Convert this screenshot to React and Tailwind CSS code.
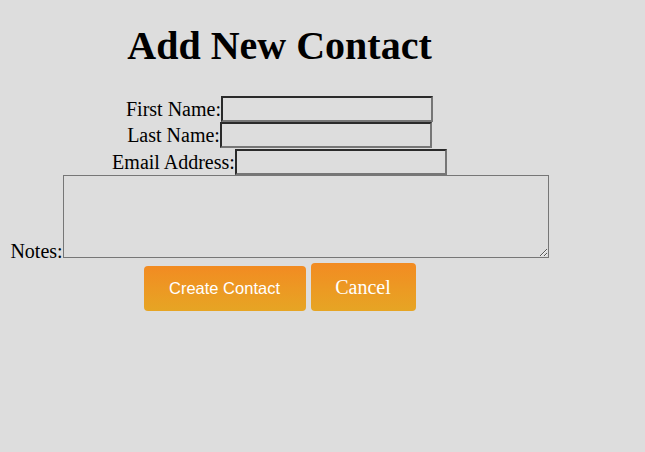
export default function App() {
  const inputCls =
    "w-[212px] h-[26px] bg-[#dddddd] border-2 border-t-[#2a2a2a] border-l-[#2a2a2a] border-b-[#767676] border-r-[#767676] outline-none";
  return (
    <div className="min-h-screen w-full bg-[#dddddd] text-black font-['Liberation_Serif',serif] text-[20px]">
      <div className="w-[559px]">
        <h1 className="pt-[23px] text-center text-[40px] font-bold leading-[46px]">Add New Contact</h1>
        <div className="mt-[27px] flex flex-col">
          <div className="flex h-[26px] items-end justify-center">
            <span className="leading-[25px]">First Name:</span>
            <input className={inputCls} />
          </div>
          <div className="flex h-[26px] items-end justify-center">
            <span className="leading-[25px]">Last Name:</span>
            <input className={inputCls} />
          </div>
          <div className="flex h-[27px] items-end justify-center">
            <span className="leading-[25px]">Email Address:</span>
            <input className={inputCls} />
          </div>
          <div className="flex items-end justify-center">
            <span className="leading-[14px]">Notes:</span>
            <textarea className="h-[83px] w-[486px] border border-[#767676] bg-[#dddddd] outline-none block" />
          </div>
          <div className="mt-[5px] flex items-end justify-center gap-[5px]">
            <button className="h-[45px] w-[162px] rounded-[4px] bg-gradient-to-b from-[#f28b22] to-[#e6a524] font-['Liberation_Sans',sans-serif] text-[16.5px] text-white">
              Create Contact
            </button>
            <button className="h-[48px] w-[105px] rounded-[4px] bg-gradient-to-b from-[#f28b22] to-[#e6a524] font-['Liberation_Serif',serif] text-[20px] text-white">
              Cancel
            </button>
          </div>
        </div>
      </div>
    </div>
  );
}
